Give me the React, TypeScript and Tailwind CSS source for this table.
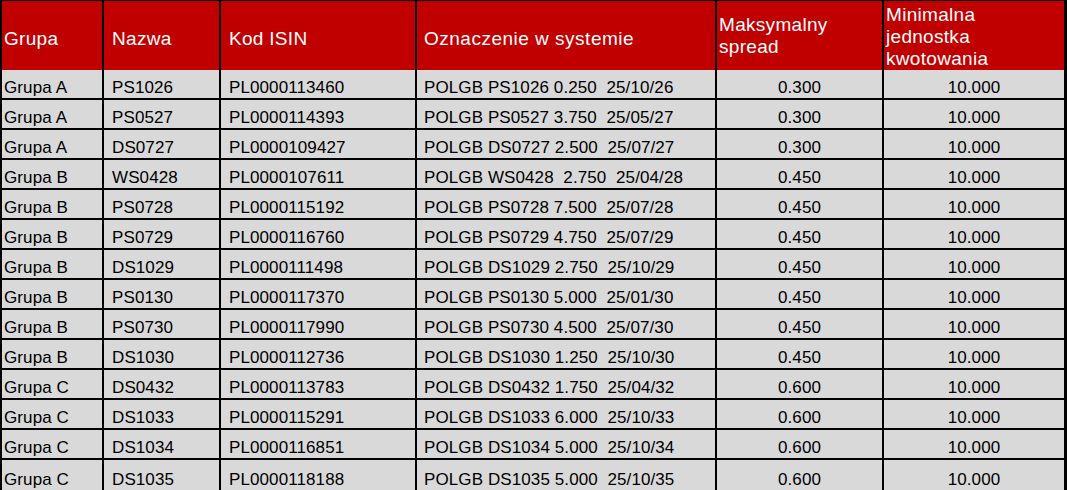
import React from "react";

type Row = {
  grupa: string;
  nazwa: string;
  isin: string;
  oznaczenie: string;
  spread: string;
  jednostka: string;
};

const rows: Row[] = [
  { grupa: "Grupa A", nazwa: "PS1026", isin: "PL0000113460", oznaczenie: "POLGB PS1026 0.250  25/10/26", spread: "0.300", jednostka: "10.000" },
  { grupa: "Grupa A", nazwa: "PS0527", isin: "PL0000114393", oznaczenie: "POLGB PS0527 3.750  25/05/27", spread: "0.300", jednostka: "10.000" },
  { grupa: "Grupa A", nazwa: "DS0727", isin: "PL0000109427", oznaczenie: "POLGB DS0727 2.500  25/07/27", spread: "0.300", jednostka: "10.000" },
  { grupa: "Grupa B", nazwa: "WS0428", isin: "PL0000107611", oznaczenie: "POLGB WS0428  2.750  25/04/28", spread: "0.450", jednostka: "10.000" },
  { grupa: "Grupa B", nazwa: "PS0728", isin: "PL0000115192", oznaczenie: "POLGB PS0728 7.500  25/07/28", spread: "0.450", jednostka: "10.000" },
  { grupa: "Grupa B", nazwa: "PS0729", isin: "PL0000116760", oznaczenie: "POLGB PS0729 4.750  25/07/29", spread: "0.450", jednostka: "10.000" },
  { grupa: "Grupa B", nazwa: "DS1029", isin: "PL0000111498", oznaczenie: "POLGB DS1029 2.750  25/10/29", spread: "0.450", jednostka: "10.000" },
  { grupa: "Grupa B", nazwa: "PS0130", isin: "PL0000117370", oznaczenie: "POLGB PS0130 5.000  25/01/30", spread: "0.450", jednostka: "10.000" },
  { grupa: "Grupa B", nazwa: "PS0730", isin: "PL0000117990", oznaczenie: "POLGB PS0730 4.500  25/07/30", spread: "0.450", jednostka: "10.000" },
  { grupa: "Grupa B", nazwa: "DS1030", isin: "PL0000112736", oznaczenie: "POLGB DS1030 1.250  25/10/30", spread: "0.450", jednostka: "10.000" },
  { grupa: "Grupa C", nazwa: "DS0432", isin: "PL0000113783", oznaczenie: "POLGB DS0432 1.750  25/04/32", spread: "0.600", jednostka: "10.000" },
  { grupa: "Grupa C", nazwa: "DS1033", isin: "PL0000115291", oznaczenie: "POLGB DS1033 6.000  25/10/33", spread: "0.600", jednostka: "10.000" },
  { grupa: "Grupa C", nazwa: "DS1034", isin: "PL0000116851", oznaczenie: "POLGB DS1034 5.000  25/10/34", spread: "0.600", jednostka: "10.000" },
  { grupa: "Grupa C", nazwa: "DS1035", isin: "PL0000118188", oznaczenie: "POLGB DS1035 5.000  25/10/35", spread: "0.600", jednostka: "10.000" },
];

const cols = "grid grid-cols-[100px_115px_194px_298px_165px_180px] gap-x-[2px]";

export default function App() {
  return (
    <div
      className="w-[1067px] h-[490px] overflow-hidden bg-black pl-[2px] pr-[3px] pt-[1px]"
      style={{ fontFamily: '"Liberation Sans", Arial, sans-serif' }}
    >
      {/* header */}
      <div className={`${cols} h-[67px] text-white text-[19px] leading-[22px] tracking-[0.3px]`}>
        <div className="bg-[#c00000] flex items-center pl-[2px] pt-[6px]">Grupa</div>
        <div className="bg-[#c00000] flex items-center pl-[8px] pt-[6px]">Nazwa</div>
        <div className="bg-[#c00000] flex items-center pl-[8px] pt-[6px]">Kod ISIN</div>
        <div className="bg-[#c00000] flex items-center pl-[7px] pt-[6px] tracking-[0.5px]">Oznaczenie w systemie</div>
        <div className="bg-[#c00000] pl-[2px] pt-[13px]">
          Maksymalny
          <br />
          spread
        </div>
        <div className="bg-[#c00000] pl-[2px] pt-[3px]">
          Minimalna
          <br />
          jednostka
          <br />
          kwotowania
        </div>
      </div>

      {/* body */}
      <div className="mt-[2px] flex flex-col gap-y-[2px] text-[17px] leading-none tracking-[0.1px] text-black">
        {rows.map((r, i) => (
          <div key={i} className={`${cols} ${i === rows.length - 1 ? "h-[30px]" : "h-[28px]"}`}>
            <div className="bg-[#d9d9d9] flex items-end pl-[2px] pb-[2px]">{r.grupa}</div>
            <div className="bg-[#d9d9d9] flex items-end pl-[8px] pb-[2px]">{r.nazwa}</div>
            <div className="bg-[#d9d9d9] flex items-end pl-[8px] pb-[2px]">{r.isin}</div>
            <div className="bg-[#d9d9d9] flex items-end pl-[7px] pb-[2px] whitespace-pre">{r.oznaczenie}</div>
            <div className="bg-[#d9d9d9] flex items-end justify-center pb-[2px]">{r.spread}</div>
            <div className="bg-[#d9d9d9] flex items-end justify-center pb-[2px]">{r.jednostka}</div>
          </div>
        ))}
      </div>
    </div>
  );
}
